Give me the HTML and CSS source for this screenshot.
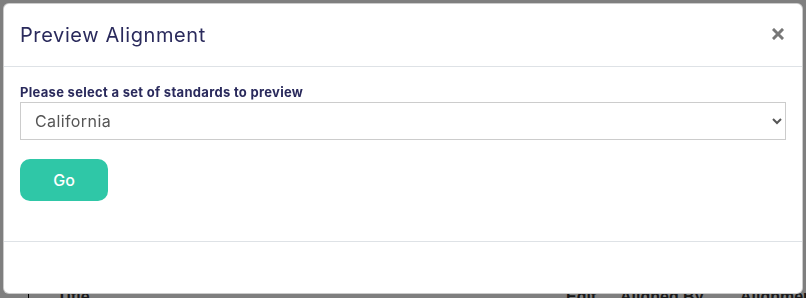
FILE: index.html
```html
<!DOCTYPE html>
<html lang="en">

<head>
  <meta charset="UTF-8">
  <meta name="viewport" content="width=device-width, initial-scale=1.0">
  <title>Preview Alignment</title>
  <link rel="stylesheet" href="styles.css">
</head>

<body>
  <!-- page behind the modal -->
  <div class="page">
    <h1 class="page_title">Mapping</h1>
    <div class="side_line"></div>
    <div class="table_head">
      <span class="col_title">Title</span>
      <span class="col_edit">Edit</span>
      <span class="col_by">Aligned By</span>
      <span class="col_align">Alignment</span>
    </div>
  </div>

  <div class="overlay">
    <div class="modal">
      <div class="modal_header">
        <h5 class="modal_title">Preview Alignment</h5>
        <span class="close_btn">
          <svg width="12" height="12" viewBox="0 0 12 12">
            <path d="M2 2 L10 10 M10 2 L2 10" stroke="#777" stroke-width="3" stroke-linecap="square" />
          </svg>
        </span>
      </div>
      <div class="modal_body">
        <label for="standards" class="select_label">Please select a set of standards to preview</label>
        <select id="standards" class="standards_select">
          <option>California</option>
        </select>
        <button type="button" class="go_btn">Go</button>
      </div>
      <div class="modal_footer"></div>
    </div>
  </div>
</body>

</html>
```

FILE: styles.css
```css
body {
  margin: 0;
  padding: 0;
  background: #fff;
  font-family: Inter, "Open Sans", sans-serif;
  height: 100vh;
  overflow: hidden;
}

.page {
  height: 100vh;
  display: flex;
  flex-direction: column;
}

.page_title {
  margin: -45px 0 0 120px;
  font-family: "Liberation Serif", serif;
  font-size: 36px;
  color: #000;
}

.side_line {
  flex: 1;
}

.table_head {
  display: flex;
  padding: 0 0 0 28px;
  border-left: 1px solid #000;
  margin-left: 28px;
  height: 10px;
  font-family: "Liberation Sans", sans-serif;
  font-weight: bold;
  font-size: 16px;
  color: #333;
  margin-top: -5px;
  padding-top: 2px;
  white-space: nowrap;
}

.table_head span {
  flex-shrink: 0;
}

.col_title {
  width: 509px;
}

.col_edit {
  width: 54px;
}

.col_by {
  width: 120px;
}

.overlay {
  position: fixed;
  top: 0;
  left: 0;
  width: 100%;
  height: 100%;
  background: rgba(0, 0, 0, 0.5);
  padding: 3px;
  box-sizing: border-box;
}

.modal {
  width: 800px;
  background: #fff;
  border: 1px solid rgba(0, 0, 0, 0.2);
  border-radius: 6px;
  box-sizing: border-box;
}

.modal_header {
  display: flex;
  align-items: center;
  justify-content: space-between;
  padding: 16px;
  height: 63px;
  box-sizing: border-box;
  border-bottom: 1px solid #dee2e6;
}

.modal_title {
  margin: 0;
  font-size: 20px;
  font-weight: 400;
  color: #2a2a5c;
  letter-spacing: 0.6px;
}

.close_btn {
  display: flex;
  margin-right: 2px;
  margin-top: -3px;
}

.modal_body {
  padding: 17px 16px 40px 16px;
  display: flex;
  flex-direction: column;
  align-items: flex-start;
  height: 175px;
  box-sizing: border-box;
  border-bottom: 1px solid #dee2e6;
}

.select_label {
  font-size: 13px;
  font-weight: 700;
  color: #2a2a5c;
  margin-bottom: 2px;
  letter-spacing: 0.3px;
}

.standards_select {
  width: 100%;
  height: 38px;
  padding: 0 10px;
  font-family: inherit;
  font-size: 16px;
  color: #555;
  background: #fff;
  border: 1px solid #ccc;
  border-radius: 0;
  letter-spacing: 0.4px;
}

.go_btn {
  margin-top: 19px;
  width: 88px;
  height: 42px;
  border: none;
  border-radius: 10px;
  background: #2fc7a7;
  color: #fff;
  font-family: inherit;
  font-size: 16px;
  font-weight: 500;
}

.modal_footer {
  height: 51px;
}
```
